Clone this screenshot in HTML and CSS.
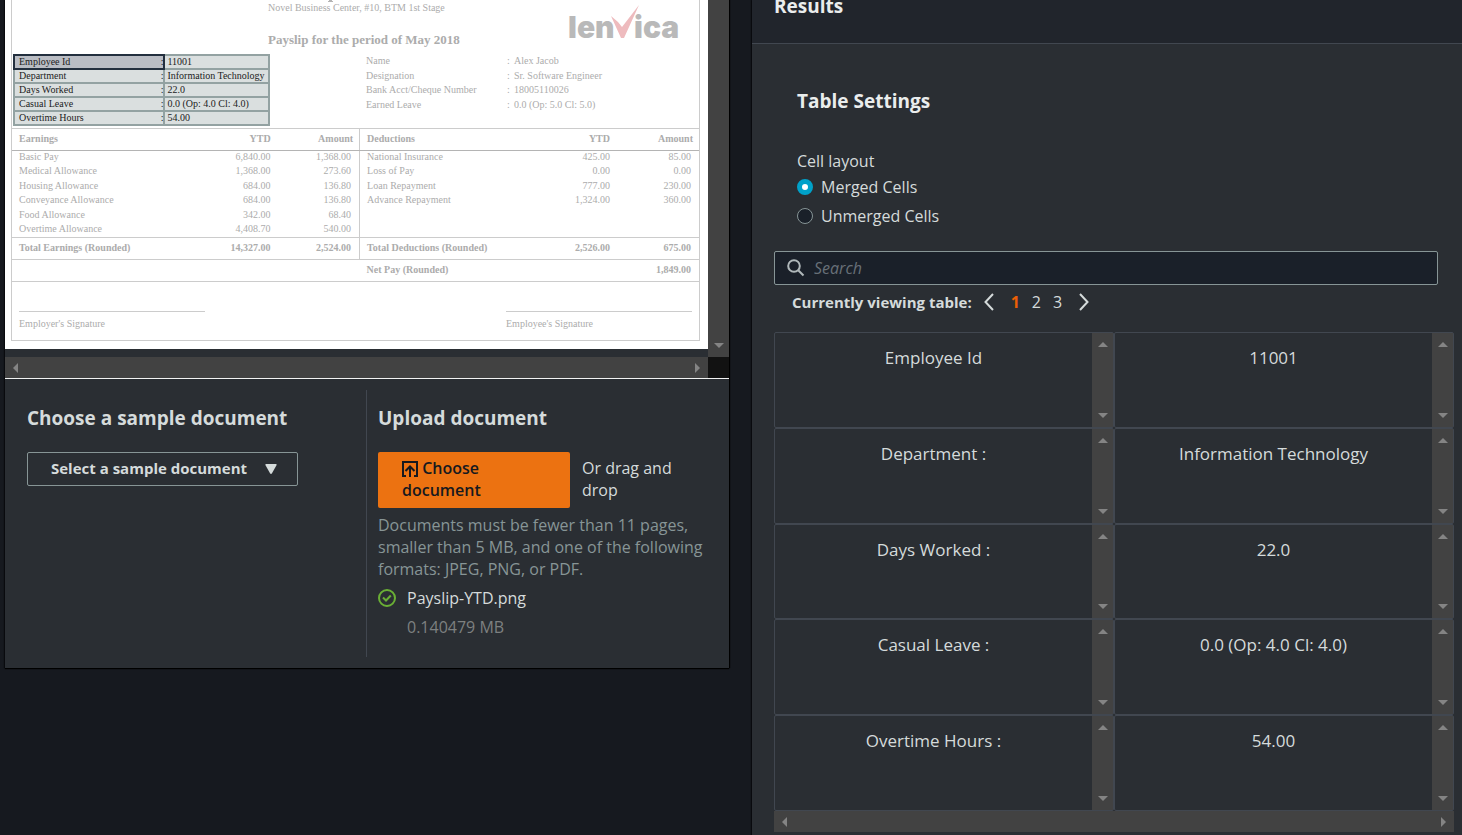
FILE: index.html
```html
<!DOCTYPE html>
<html lang="en">
<head>
<meta charset="utf-8">
<title>Analyze document</title>
<link rel="stylesheet" href="styles.css">
</head>
<body>
<main class="page">
  <section class="card document">
    <div class="viewer">
      <div class="sheet">
        <div class="slip">
          <header class="slip-head">
            <div class="slip-titles">
              <svg class="slip-mark" width="6" height="2" viewBox="0 0 6 2" aria-hidden="true"><path d="M1 0h3v1h1v1H0V1h1z" fill="#b4b4b4"/></svg>
              <p class="slip-address">Novel Business Center, #10, BTM 1st Stage</p>
              <h1 class="slip-title">Payslip for the period of May 2018</h1>
            </div>
            <svg class="logo" width="114" height="48" viewBox="0 0 114 48" role="img" aria-label="Lenvica">
              <text x="0" y="35" class="logo-text">len</text>
              <text x="66" y="35" class="logo-text">ica</text>
              <path d="M43 13 L50 19 L54 24 L71 2 L56 35 L53 35 Z" fill="#eebbbe"/>
            </svg>
          </header>
          <div class="slip-info">
            <table class="found">
              <tr><td class="picked">Employee Id<span>:</span></td><td>11001</td></tr>
              <tr><td>Department<span>:</span></td><td>Information Technology</td></tr>
              <tr><td>Days Worked<span>:</span></td><td>22.0</td></tr>
              <tr><td>Casual Leave<span>:</span></td><td>0.0 (Op: 4.0 Cl: 4.0)</td></tr>
              <tr><td>Overtime Hours<span>:</span></td><td>54.00</td></tr>
            </table>
            <table class="person">
              <tr><td>Name</td><td>:</td><td>Alex Jacob</td></tr>
              <tr><td>Designation</td><td>:</td><td>Sr. Software Engineer</td></tr>
              <tr><td>Bank Acct/Cheque Number</td><td>:</td><td>18005110026</td></tr>
              <tr><td>Earned Leave</td><td>:</td><td>0.0 (Op: 5.0 Cl: 5.0)</td></tr>
            </table>
          </div>
          <table class="pay">
            <colgroup><col class="c-first"><col class="c-ytd"><col class="c-amt"><col class="c-name"><col class="c-ytd"><col class="c-amt"></colgroup>
            <thead><tr><th>Earnings</th><th>YTD</th><th>Amount</th><th>Deductions</th><th>YTD</th><th>Amount</th></tr></thead>
            <tbody>
              <tr><td>Basic Pay</td><td>6,840.00</td><td>1,368.00</td><td>National Insurance</td><td>425.00</td><td>85.00</td></tr>
              <tr><td>Medical Allowance</td><td>1,368.00</td><td>273.60</td><td>Loss of Pay</td><td>0.00</td><td>0.00</td></tr>
              <tr><td>Housing Allowance</td><td>684.00</td><td>136.80</td><td>Loan Repayment</td><td>777.00</td><td>230.00</td></tr>
              <tr><td>Conveyance Allowance</td><td>684.00</td><td>136.80</td><td>Advance Repayment</td><td>1,324.00</td><td>360.00</td></tr>
              <tr><td>Food Allowance</td><td>342.00</td><td>68.40</td><td></td><td></td><td></td></tr>
              <tr><td>Overtime Allowance</td><td>4,408.70</td><td>540.00</td><td></td><td></td><td></td></tr>
            </tbody>
            <tfoot>
              <tr><td>Total Earnings (Rounded)</td><td>14,327.00</td><td>2,524.00</td><td>Total Deductions (Rounded)</td><td>2,526.00</td><td>675.00</td></tr>
              <tr class="net"><td></td><td></td><td></td><td>Net Pay (Rounded)</td><td></td><td>1,849.00</td></tr>
            </tfoot>
          </table>
          <div class="signs"><p>Employer's Signature</p><p>Employee's Signature</p></div>
        </div>
      </div>
      <div class="vbar vbar-end"><i class="arrow down"></i></div>
      <div class="hbar"><i class="arrow left"></i><i class="arrow right"></i></div>
      <div class="corner"></div>
    </div>
    <div class="sources">
      <div class="sample">
        <h2 id="sample-title">Choose a sample document</h2>
        <div class="select">
          <select aria-labelledby="sample-title"><option>Select a sample document</option></select>
          <svg class="select-arrow" width="12" height="10" viewBox="0 0 12 10" aria-hidden="true"><path d="M1 0h10q1 0 .6.9L7 9.2q-1 1.400-2 0L.4.900Q0 0 1 0z" fill="#d5dbdb"/></svg>
        </div>
      </div>
      <div class="upload">
        <h2>Upload document</h2>
        <div class="upload-row">
          <button class="choose" type="button"><svg width="16" height="16" viewBox="0 0 16 16" fill="none" stroke="#16191f" stroke-width="2" aria-hidden="true"><path d="M4 15H1V1h14v14h-3M8 16V6M3.500 10 8 5.500 12.500 10"/></svg> Choose document</button>
          <p>Or drag and drop</p>
        </div>
        <p class="hint">Documents must be fewer than 11 pages, smaller than 5 MB, and one of the following formats: JPEG, PNG, or PDF.</p>
        <div class="file">
          <svg width="18" height="18" viewBox="0 0 18 18" fill="none" stroke="#6aaf35" stroke-width="2" aria-hidden="true"><circle cx="9" cy="9" r="8"/><path d="M5 8.500 8 11.500 12.800 6.500"/></svg>
          <div><p>Payslip-YTD.png</p><p class="size">0.140479 MB</p></div>
        </div>
      </div>
    </div>
  </section>

  <section class="card results">
    <header class="results-head"><h2>Results</h2></header>
    <div class="results-body">
      <div class="settings">
        <h3>Table Settings</h3>
        <fieldset>
          <legend>Cell layout</legend>
          <label><input type="radio" name="layout" checked>Merged Cells</label>
          <label><input type="radio" name="layout">Unmerged Cells</label>
        </fieldset>
      </div>
      <div class="search">
        <svg width="18" height="18" viewBox="0 0 18 18" fill="none" stroke="#b0b8ba" stroke-width="2" aria-hidden="true"><circle cx="7" cy="7" r="5.800"/><path d="M11.200 11.200 16.500 16.500"/></svg>
        <input type="text" placeholder="Search" aria-label="Search">
      </div>
      <nav class="pager">
        <strong>Currently viewing table:</strong>
        <button type="button" aria-label="Previous"><svg width="10" height="18" viewBox="0 0 10 18" fill="none" stroke="#d5dbdb" stroke-width="2"><path d="M9 1 1.500 9 9 17"/></svg></button>
        <button type="button" class="current">1</button>
        <button type="button">2</button>
        <button type="button">3</button>
        <button type="button" aria-label="Next"><svg width="10" height="18" viewBox="0 0 10 18" fill="none" stroke="#d5dbdb" stroke-width="2"><path d="M1 1 8.500 9 1 17"/></svg></button>
      </nav>
      <div class="grid">
        <table>
          <tr><td><div class="cell"><p>Employee Id</p><div class="vbar"><i class="arrow up"></i><i class="arrow down"></i></div></div></td><td><div class="cell"><p>11001</p><div class="vbar"><i class="arrow up"></i><i class="arrow down"></i></div></div></td></tr>
          <tr><td><div class="cell"><p>Department :</p><div class="vbar"><i class="arrow up"></i><i class="arrow down"></i></div></div></td><td><div class="cell"><p>Information Technology</p><div class="vbar"><i class="arrow up"></i><i class="arrow down"></i></div></div></td></tr>
          <tr class="short"><td><div class="cell"><p>Days Worked :</p><div class="vbar"><i class="arrow up"></i><i class="arrow down"></i></div></div></td><td><div class="cell"><p>22.0</p><div class="vbar"><i class="arrow up"></i><i class="arrow down"></i></div></div></td></tr>
          <tr><td><div class="cell"><p>Casual Leave :</p><div class="vbar"><i class="arrow up"></i><i class="arrow down"></i></div></div></td><td><div class="cell"><p>0.0 (Op: 4.0 Cl: 4.0)</p><div class="vbar"><i class="arrow up"></i><i class="arrow down"></i></div></div></td></tr>
          <tr><td><div class="cell"><p>Overtime Hours :</p><div class="vbar"><i class="arrow up"></i><i class="arrow down"></i></div></div></td><td><div class="cell"><p>54.00</p><div class="vbar"><i class="arrow up"></i><i class="arrow down"></i></div></div></td></tr>
        </table>
        <div class="hbar"><i class="arrow left"></i><i class="arrow right"></i></div>
      </div>
    </div>
  </section>
</main>
</body>
</html>
```
FILE: styles.css
```css
* { box-sizing: border-box; }
body {
  margin: 0;
  background: #16191f;
  color: #d5dbdb;
  font: 16px/22px "Open Sans", "Noto Sans", sans-serif;
  overflow: hidden;
}
h1, h2, h3, p { margin: 0; }
button, input, select { font: inherit; color: inherit; }

.page {
  display: grid;
  grid-template-columns: 724fr 710fr;
  gap: 23px;
  align-items: start;
  min-height: 100vh;
  padding-left: 5px;
}
.card {
  background: #2a2e33;
  box-shadow: 0 1px 1px #000, 1px 0 1px #000, -1px 0 1px #0b0d11;
}

/* Scroll bars */
.vbar, .hbar {
  display: flex;
  justify-content: space-between;
  align-items: center;
  background: #424242;
}
.vbar { flex-direction: column; width: 21px; padding: 9px 0; }
.vbar-end { justify-content: flex-end; }
.hbar { height: 21px; padding: 0 8px; }
.arrow { border: 5px solid transparent; }
.up { border-top: 0; border-bottom-color: #848484; }
.down { border-bottom: 0; border-top-color: #848484; }
.left { border-left: 0; border-right-color: #848484; }
.right { border-right: 0; border-left-color: #848484; }

/* Document viewer */
.viewer {
  display: grid;
  grid-template-columns: 1fr 21px;
  border-bottom: 1px solid #f2f3f3;
}
.sheet {
  background: #fff;
  border-bottom: 8px solid #2a2e33;
  padding: 0 8px 8px 6px;
  color: #acacac;
  font: 10px/12px "Liberation Serif", serif;
}
.corner { background: #121212; }
.slip { border: 1px solid #ccc; border-top: 0; }
.slip table { border-collapse: collapse; }
.slip td, .slip th { padding: 0; text-align: left; white-space: nowrap; }

.slip-head {
  display: flex;
  justify-content: space-between;
  height: 54px;
  padding: 0 17px 0 256px;
}
.slip-mark { display: block; margin-left: 60px; }
.slip-titles { white-space: nowrap; line-height: 11px; }
.slip-title { margin-top: 19px; font-size: 13px; line-height: 16px; }
.logo { margin-top: 3px; }
.logo-text { font: 900 30px "Inter", sans-serif; fill: #b9b9b9; }

.slip-info {
  display: grid;
  grid-template-columns: 354fr 333fr;
  align-items: start;
  height: 74px;
}
.found { width: 257px; margin-left: 1px; table-layout: fixed; color: #222; }
.slip .found td {
  height: 14px;
  padding: 0 0 0 2px;
  border: 2px solid #93a2a2;
  background: #dadfdf;
  line-height: 12px;
}
.slip .found td:first-child { width: 59%; padding-left: 4px; }
.slip .found .picked { background: #babdc4; border-color: #232f3e; }
.found span { float: right; }
.person td { height: 14px; }
.person tr:nth-child(even) td { height: 15px; }
.person td:first-child { width: 141px; }
.person td:nth-child(2) { width: 7px; }

.pay { width: 100%; table-layout: fixed; border-top: 1px solid #ccc; }
.c-first { width: 26%; }
.c-ytd { width: 80px; }
.c-amt { width: 89px; }
.slip .pay th { height: 22px; padding-bottom: 2px; border-bottom: 1px solid #b4b4b4; }
.pay tbody td { height: 14px; line-height: 11px; vertical-align: top; }
.pay tbody tr:nth-child(even) td { height: 15px; }
.slip .pay tr > :not(:nth-child(3n+1)) { text-align: right; }
.slip .pay tr > :nth-child(3n+1) { padding-left: 7px; }
.slip .pay tr > :nth-child(3n) { padding-right: 8px; }
.slip .pay th:nth-child(3n) { padding-right: 6px; }
.pay tr:not(.net) > :nth-child(3) { border-right: 1px solid #ccc; }
.slip .pay tfoot td { height: 22px; padding-bottom: 2px; border-top: 1px solid #ccc; border-bottom: 1px solid #ccc; font-weight: bold; }

.signs {
  display: flex;
  justify-content: space-between;
  padding: 29px 7px 10px;
}
.signs p { width: 186px; padding-top: 6px; border-top: 1px solid #ccc; }

/* Document sources */
.sources {
  display: grid;
  grid-template-columns: 361fr 363fr;
  padding: 11px 0;
}
.sources h2 { font-size: 19px; line-height: 24px; }
.sample { padding: 16px 22px; }
.select { position: relative; width: 271px; margin-top: 22px; }
.select select {
  display: block;
  width: 100%;
  height: 34px;
  padding: 0 23px 2px;
  border: 1px solid #879596;
  border-radius: 2px;
  background: none;
  appearance: none;
  font-size: 15px;
  font-weight: bold;
}
.select-arrow { position: absolute; right: 21px; top: 12px; pointer-events: none; }
.upload { padding: 16px 26px 19px 11px; border-left: 1px solid #414750; }
.upload-row { display: flex; gap: 12px; margin-top: 22px; }
.upload-row p { width: 100px; padding-top: 5px; }
.choose {
  width: 192px;
  height: 56px;
  padding: 0 24px 2px;
  border: 0;
  border-radius: 2px;
  background: #ec7211;
  color: #16191f;
  text-align: left;
  font-weight: 600;
}
.choose svg { vertical-align: -3px; }
.hint { margin-top: 6px; color: #879596; }
.file { display: flex; gap: 11px; margin-top: 7px; }
.file svg { margin-top: 2px; }
.size { margin-top: 7px; color: #7d8080; }

/* Results */
.results { min-height: 100vh; }
.results-head {
  height: 44px;
  padding: 0 22px;
  background: #21252c;
  border-bottom: 1px solid #414750;
}
.results-head h2 { font-size: 19px; line-height: 12px; color: #eaeded; }
.results-body { padding: 45px 8px 0 22px; }
.settings { padding-left: 23px; }
.settings h3 { font-size: 19px; line-height: 24px; color: #eaeded; }
fieldset { margin: 37px 0 0; padding: 0; border: 0; }
legend { padding: 0; }
fieldset label { display: flex; align-items: center; gap: 8px; height: 29px; }
fieldset input {
  width: 16px;
  height: 16px;
  margin: 0;
  appearance: none;
  border: 1px solid #879596;
  border-radius: 50%;
  background: #1a2029;
}
fieldset input:checked { border: 5px solid #00a1c9; background: #fff; }

.search {
  display: flex;
  align-items: center;
  gap: 9px;
  height: 34px;
  margin: 21px 16px 0 0;
  padding-left: 12px;
  border: 1px solid #879596;
  border-radius: 2px;
  background: #1a2029;
}
.search input { flex: 1; border: 0; padding: 0; background: none; outline: 0; }
.search input::placeholder { color: #687078; font-style: italic; opacity: 1; }
.pager { display: flex; align-items: center; gap: 12px; height: 34px; padding-left: 18px; }
.pager strong { font-size: 15px; }
.pager button { display: flex; padding: 0; border: 0; background: none; }
.pager .current { margin-left: 5px; color: #eb5f07; font-weight: bold; }
.pager button:last-child { margin-left: 5px; }

.grid { margin-top: 13px; }
.grid table { width: 100%; table-layout: fixed; border-spacing: 0; font-size: 17px; }
.grid td { padding: 0; border: 1px solid #414750; border-radius: 2px; }
.cell { display: flex; height: 94px; }
.short .cell { height: 93px; }
.cell p { flex: 1; padding-top: 14px; text-align: center; }
```
